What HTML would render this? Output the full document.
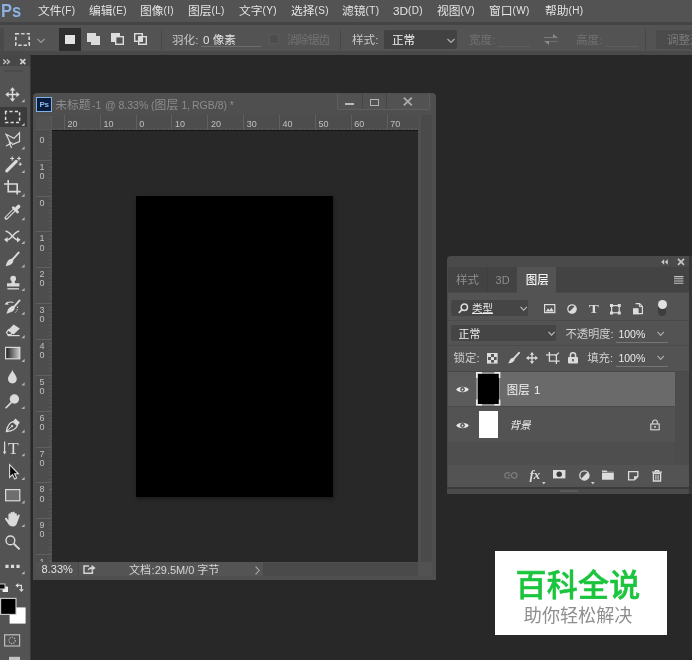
<!DOCTYPE html>
<html lang="zh-CN">
<head>
<meta charset="utf-8">
<title>Photoshop</title>
<style>
*{box-sizing:border-box;margin:0;padding:0}
html,body{width:692px;height:660px;overflow:hidden;background:#282828}body{will-change:transform;background:transparent}
body{position:relative;font-family:"Liberation Sans","Noto Sans CJK SC",sans-serif;font-size:12px;color:#dcdcdc;line-height:1}
.abs{position:absolute}
.t{position:absolute;white-space:nowrap;line-height:14px;height:14px}
#menubar{left:0;top:0;width:692px;height:22px;background:#535353}
#menusep{left:0;top:21.8px;width:692px;height:3px;background:#444}
#optbar{left:0;top:24.7px;width:692px;height:26.7px;background:#535353}
#optsep{left:0;top:51.4px;width:692px;height:3.4px;background:#494949}
.menu{top:3.9px;font-size:11.8px;color:#e4e4e4}
.menu small{font-size:10px;letter-spacing:0.3px;position:relative;top:-0.9px}
#toolbar{left:0;top:55px;width:30.2px;height:605px;background:#535353}
#toolhead{left:0;top:55px;width:30.2px;height:11.2px;background:#474747}
svg{position:absolute;overflow:visible}
.rl{font-size:9px;color:#c0c0c0;line-height:14px}
.tt{top:97.5px;color:#8c8c8c}
</style>
</head>
<body>
<!-- menu bar -->
<div id="menubar" class="abs"></div>
<div id="menusep" class="abs"></div>
<div id="optbar" class="abs"></div>
<div id="optsep" class="abs"></div>
<div class="t" style="left:1.2px;top:0.6px;font-size:19px;font-weight:bold;color:#8ab1e0;line-height:20px;height:20px;letter-spacing:0;transform:scaleX(0.87);transform-origin:0 0">Ps</div>
<div class="t menu" style="left:38px">文件<small>(F)</small></div>
<div class="t menu" style="left:89px">编辑<small>(E)</small></div>
<div class="t menu" style="left:140px">图像<small>(I)</small></div>
<div class="t menu" style="left:188px">图层<small>(L)</small></div>
<div class="t menu" style="left:239px">文字<small>(Y)</small></div>
<div class="t menu" style="left:291px">选择<small>(S)</small></div>
<div class="t menu" style="left:342px">滤镜<small>(T)</small></div>
<div class="t menu" style="left:393px">3D<small>(D)</small></div>
<div class="t menu" style="left:437px">视图<small>(V)</small></div>
<div class="t menu" style="left:489px">窗口<small>(W)</small></div>
<div class="t menu" style="left:545px">帮助<small>(H)</small></div>


<!-- options bar -->
<div class="abs" style="left:0;top:28px;width:4px;height:23px;background:#4a4a4a"></div>
<svg style="left:15px;top:33px" width="16" height="14" viewBox="0 0 16 14"><rect x="0.8" y="0.8" width="13.4" height="11.4" fill="none" stroke="#d6d6d6" stroke-width="1.6" stroke-dasharray="3.4 2"/></svg>
<svg style="left:37px;top:38px" width="8" height="6" viewBox="0 0 8 6"><path d="M0.5 1 L4 4.5 L7.5 1" fill="none" stroke="#9a9a9a" stroke-width="1.2"/></svg>
<div class="abs" style="left:59px;top:28px;width:22px;height:23px;background:#2e2e2e"></div>
<div class="abs" style="left:65.2px;top:34.6px;width:9.6px;height:9.6px;background:#e2e2e2"></div>
<svg style="left:87px;top:33px" width="14" height="13" viewBox="0 0 14 13"><path d="M0 0H9V3H13V12H4V9H0Z" fill="#dcdcdc"/></svg>
<svg style="left:111px;top:33px" width="14" height="13" viewBox="0 0 14 13"><path d="M0 0H9V3H4V9H0Z" fill="#dcdcdc"/><rect x="4.7" y="3.7" width="7.6" height="7.6" fill="none" stroke="#dcdcdc" stroke-width="1.4"/></svg>
<svg style="left:134px;top:33px" width="14" height="13" viewBox="0 0 14 13"><rect x="0.7" y="0.7" width="7.6" height="7.6" fill="none" stroke="#dcdcdc" stroke-width="1.4"/><rect x="4.7" y="3.7" width="7.6" height="7.6" fill="none" stroke="#dcdcdc" stroke-width="1.4"/><rect x="5" y="4" width="3" height="4" fill="#dcdcdc"/></svg>
<div class="abs" style="left:161px;top:29px;width:1px;height:21px;background:#474747"></div>
<div class="t" style="left:172px;top:32.9px;font-size:11.6px;color:#c8c8c8">羽化:</div>
<div class="t" style="left:203px;top:32.9px;font-size:11.6px;color:#e0e0e0">0 像素</div>
<div class="abs" style="left:201px;top:46px;width:60px;height:1px;background:#6e6e6e"></div>
<div class="abs" style="left:269px;top:34px;width:10px;height:10px;background:#4d4d4d;border:1px solid #595959"></div>
<div class="t" style="left:287px;top:32.9px;font-size:11.6px;color:#727272;letter-spacing:-1.1px">消除锯齿</div>
<div class="abs" style="left:340px;top:29px;width:1px;height:21px;background:#474747"></div>
<div class="t" style="left:352px;top:32.9px;font-size:11.6px;color:#c8c8c8">样式:</div>
<div class="abs" style="left:384px;top:30px;width:73px;height:19px;background:#424242;border-radius:2px"></div>
<div class="t" style="left:392px;top:32.9px;font-size:11.6px;color:#f0f0f0">正常</div>
<svg style="left:447px;top:38px" width="8" height="6" viewBox="0 0 8 6"><path d="M0.5 1 L4 4.5 L7.5 1" fill="none" stroke="#b0b0b0" stroke-width="1.2"/></svg>
<div class="t" style="left:469px;top:32.9px;font-size:11.6px;color:#717171">宽度:</div>
<div class="abs" style="left:498px;top:46px;width:32px;height:1px;background:#5e5e5e"></div>
<svg style="left:544px;top:33px" width="14" height="13" viewBox="0 0 14 13"><path d="M0 4 H9 V1 L14 4.8 H0Z M14 8.5 H5 V12 L0 8 H14Z" fill="#8a8a8a"/></svg>
<div class="t" style="left:576px;top:32.9px;font-size:11.6px;color:#717171">高度:</div>
<div class="abs" style="left:606px;top:46px;width:32px;height:1px;background:#5e5e5e"></div>
<div class="abs" style="left:645px;top:29px;width:1px;height:21px;background:#474747"></div>
<div class="abs" style="left:656px;top:30px;width:40px;height:19px;background:#4b4b4b;border-radius:2px"></div>
<div class="t" style="left:667px;top:32.9px;font-size:11.6px;color:#7a7a7a">调整边缘</div>


<!-- document window -->
<div class="abs" style="left:32.6px;top:93px;width:403.2px;height:487.2px;background:#4f4f4f;border-radius:4px 4px 0 0"></div>

<div class="abs" style="left:36px;top:96.5px;width:15.5px;height:15px;background:#0b1c3c;border:1.3px solid #7fb2ea"></div>
<div class="t" style="left:39.4px;top:97.6px;font-size:8px;font-weight:bold;color:#8dbcf0;line-height:13px;height:13px;letter-spacing:-0.2px">Ps</div>
<div class="t tt" style="left:55.2px;font-size:11.8px">未标题</div><div class="t tt" style="left:92px;font-size:10.5px">-1</div><div class="t tt" style="left:105px;font-size:10.5px">@</div><div class="t tt" style="left:118.5px;font-size:10.5px">8.33%</div><div class="t tt" style="left:151px;font-size:10.5px">(</div><div class="t tt" style="left:154.6px;font-size:11.8px">图层</div><div class="t tt" style="left:181.5px;font-size:10.5px">1,</div><div class="t tt" style="left:192px;font-size:10.5px">RGB/8)</div><div class="t tt" style="left:229.8px;font-size:10.5px">*</div>
<div class="abs" style="left:336.5px;top:94px;width:93px;height:16px;background:#525252;border:1px solid #5e5e5e;border-top:none;border-radius:0 0 2px 2px"></div>
<div class="abs" style="left:362px;top:94px;width:1px;height:15px;background:#454545"></div>
<div class="abs" style="left:386px;top:94px;width:1px;height:15px;background:#454545"></div>
<div class="abs" style="left:345px;top:103px;width:9px;height:2px;background:#b9b9b9"></div>
<div class="abs" style="left:370px;top:99px;width:9.2px;height:7.2px;border:1.5px solid #b3b3b3"></div>
<svg style="left:403.2px;top:97.3px" width="10" height="9" viewBox="0 0 10 9"><path d="M0.8 0.6L8.8 8.4M8.8 0.6L0.8 8.4" stroke="#adadad" stroke-width="1.8" fill="none"/></svg>
<!-- rulers -->
<div class="abs" style="left:36px;top:115px;width:382px;height:15.5px;background:#4d4d4d"></div>
<div class="abs" style="left:36px;top:115px;width:15.6px;height:447px;background:#4d4d4d"></div>
<div class="abs" style="left:36px;top:115.5px;width:15.5px;height:14px;background:#525252;border-right:1px dotted #5e5e5e;border-bottom:1px dotted #5e5e5e"></div>
<div class="abs" style="left:51.6px;top:127.5px;width:366px;height:2.5px;background:repeating-linear-gradient(90deg,#777 0 1px,transparent 1px 3.585px);background-position:1.45px 0;opacity:.38"></div>
<div class="abs" style="left:49px;top:131px;width:2.5px;height:431px;background:repeating-linear-gradient(180deg,#777 0 1px,transparent 1px 3.585px);background-position:0 -0.43px;opacity:.38"></div>
<div class="abs" style="left:63.8px;top:115px;width:1px;height:15px;background:#606060"></div><div class="t rl" style="left:67.5px;top:117.3px">20</div><div class="abs" style="left:99.7px;top:115px;width:1px;height:15px;background:#606060"></div><div class="t rl" style="left:103.4px;top:117.3px">10</div><div class="abs" style="left:135.5px;top:115px;width:1px;height:15px;background:#606060"></div><div class="t rl" style="left:139.2px;top:117.3px">0</div><div class="abs" style="left:171.3px;top:115px;width:1px;height:15px;background:#606060"></div><div class="t rl" style="left:175.0px;top:117.3px">10</div><div class="abs" style="left:207.2px;top:115px;width:1px;height:15px;background:#606060"></div><div class="t rl" style="left:210.9px;top:117.3px">20</div><div class="abs" style="left:243.1px;top:115px;width:1px;height:15px;background:#606060"></div><div class="t rl" style="left:246.8px;top:117.3px">30</div><div class="abs" style="left:278.9px;top:115px;width:1px;height:15px;background:#606060"></div><div class="t rl" style="left:282.6px;top:117.3px">40</div><div class="abs" style="left:314.8px;top:115px;width:1px;height:15px;background:#606060"></div><div class="t rl" style="left:318.4px;top:117.3px">50</div><div class="abs" style="left:350.6px;top:115px;width:1px;height:15px;background:#606060"></div><div class="t rl" style="left:354.3px;top:117.3px">60</div><div class="abs" style="left:386.5px;top:115px;width:1px;height:15px;background:#606060"></div><div class="t rl" style="left:390.2px;top:117.3px">70</div>
<div class="t rl" style="left:39.5px;top:133.0px">0</div><div class="abs" style="left:36px;top:159.6px;width:15px;height:1px;background:#606060"></div><div class="t rl" style="left:39.5px;top:159.6px">1</div><div class="t rl" style="left:39.5px;top:168.8px">0</div><div class="abs" style="left:36px;top:195.5px;width:15px;height:1px;background:#606060"></div><div class="t rl" style="left:39.5px;top:195.5px">0</div><div class="abs" style="left:36px;top:231.3px;width:15px;height:1px;background:#606060"></div><div class="t rl" style="left:39.5px;top:231.3px">1</div><div class="t rl" style="left:39.5px;top:240.5px">0</div><div class="abs" style="left:36px;top:267.2px;width:15px;height:1px;background:#606060"></div><div class="t rl" style="left:39.5px;top:267.2px">2</div><div class="t rl" style="left:39.5px;top:276.4px">0</div><div class="abs" style="left:36px;top:303.0px;width:15px;height:1px;background:#606060"></div><div class="t rl" style="left:39.5px;top:303.0px">3</div><div class="t rl" style="left:39.5px;top:312.2px">0</div><div class="abs" style="left:36px;top:338.9px;width:15px;height:1px;background:#606060"></div><div class="t rl" style="left:39.5px;top:338.9px">4</div><div class="t rl" style="left:39.5px;top:348.1px">0</div><div class="abs" style="left:36px;top:374.8px;width:15px;height:1px;background:#606060"></div><div class="t rl" style="left:39.5px;top:374.8px">5</div><div class="t rl" style="left:39.5px;top:384.0px">0</div><div class="abs" style="left:36px;top:410.6px;width:15px;height:1px;background:#606060"></div><div class="t rl" style="left:39.5px;top:410.6px">6</div><div class="t rl" style="left:39.5px;top:419.8px">0</div><div class="abs" style="left:36px;top:446.5px;width:15px;height:1px;background:#606060"></div><div class="t rl" style="left:39.5px;top:446.5px">7</div><div class="t rl" style="left:39.5px;top:455.6px">0</div><div class="abs" style="left:36px;top:482.3px;width:15px;height:1px;background:#606060"></div><div class="t rl" style="left:39.5px;top:482.3px">8</div><div class="t rl" style="left:39.5px;top:491.5px">0</div><div class="abs" style="left:36px;top:518.2px;width:15px;height:1px;background:#606060"></div><div class="t rl" style="left:39.5px;top:518.2px">9</div><div class="t rl" style="left:39.5px;top:527.4px">0</div><div class="abs" style="left:36px;top:554.0px;width:15px;height:1px;background:#606060"></div><div class="abs" style="left:36px;top:557px;width:15px;height:5px;overflow:hidden"><div class="t rl" style="left:3.5px;top:-2px">1</div></div>
<!-- canvas -->
<div class="abs" style="left:51.6px;top:130.3px;width:366px;height:431.5px;background:#282828;border-top:1px solid #151515"></div>
<div class="abs" style="left:135.6px;top:195.6px;width:197.4px;height:301px;background:#000;box-shadow:1px 2px 4px rgba(0,0,0,.35)"></div>
<!-- scrollbars / status -->
<div class="abs" style="left:417.6px;top:115px;width:14.8px;height:447px;background:#4a4a4a;border-left:3px solid #505050"></div>
<div class="abs" style="left:36px;top:561.8px;width:396.4px;height:14.4px;background:#4a4a4a;border-top:1px solid #505050"></div><div class="abs" style="left:417.6px;top:561.8px;width:14.8px;height:14.4px;background:#525252"></div>
<div class="abs" style="left:36px;top:561.8px;width:227.4px;height:14.4px;background:#545454"></div>
<div class="abs" style="left:36px;top:561.8px;width:43.4px;height:14.4px;background:#515151;border-right:1px solid #484848"></div>
<div class="t" style="left:41.6px;top:561.6px;font-size:11px;color:#e2e2e2">8.33%</div>
<svg style="left:82.5px;top:563.5px" width="13" height="10" viewBox="0 0 13 10"><path d="M6 2H1V9.2H9.4V6.4" fill="none" stroke="#d4d4d4" stroke-width="1.5"/><path d="M4.6 7C4.8 4.4 6.6 3 8.6 3V0.8L12.6 3.9L8.6 7V4.9C7 4.9 5.6 5.6 4.6 7Z" fill="#d4d4d4"/></svg>
<div class="t" style="left:129px;top:562.5px;font-size:11px;color:#d6d6d6">文档</div><div class="t" style="left:151.6px;top:562.5px;font-size:11px;color:#d6d6d6">:29.5M/0</div><div class="t" style="left:197.3px;top:562.5px;font-size:11px;color:#d6d6d6">字节</div>
<svg style="left:255px;top:565.5px" width="5" height="9" viewBox="0 0 5 9"><path d="M0.6 0.6L4.2 4.5L0.6 8.4" fill="none" stroke="#aaa" stroke-width="1.1"/></svg>


<!-- layers panel -->
<div class="abs" style="left:447px;top:255.5px;width:242px;height:238.5px;background:#4a4a4a;border-radius:4px 0 0 0"></div>
<div class="abs" style="left:689px;top:255.5px;width:3px;height:238.5px;background:#363636"></div>
<div class="abs" style="left:447.8px;top:267.3px;width:241.2px;height:25.2px;background:#434343"></div>
<div class="abs" style="left:517.4px;top:267.3px;width:38.8px;height:25.4px;background:#535353"></div>
<div class="abs" style="left:487px;top:267.3px;width:1px;height:25.2px;background:#3e3e3e"></div>
<div class="abs" style="left:447.8px;top:292.5px;width:241.2px;height:194.8px;background:#535353"></div>
<div class="t" style="left:456px;top:273px;font-size:11.5px;color:#8e8e8e">样式</div>
<div class="t" style="left:495.6px;top:273px;font-size:11px;color:#8e8e8e">3D</div>
<div class="t" style="left:525.8px;top:273px;font-size:11.5px;color:#f4f4f4;font-weight:500">图层</div>
<svg style="left:660px;top:258px" width="26" height="8" viewBox="0 0 26 8"><path d="M4.2 1.2V6.8L1.2 4ZM7.8 1.2V6.8L4.8 4Z" fill="#c8c8c8"/><path d="M18 0.9L24 6.9M24 0.9L18 6.9" stroke="#c8c8c8" stroke-width="1.6" fill="none"/></svg>
<svg style="left:674px;top:276px" width="10" height="8" viewBox="0 0 10 8"><path d="M0 0.6H9.4M0 2.8H9.4M0 5H9.4M0 7.2H9.4" stroke="#c4c4c4" stroke-width="1.1"/></svg>
<!-- filter row -->
<div class="abs" style="left:451.3px;top:299.8px;width:77px;height:16.2px;background:#454545;border-radius:2px"></div>
<svg style="left:457.5px;top:302.5px" width="11" height="11" viewBox="0 0 11 11"><circle cx="6.3" cy="4.2" r="3.2" fill="none" stroke="#dcdcdc" stroke-width="1.5"/><path d="M4 6.6L0.8 9.8" stroke="#dcdcdc" stroke-width="1.7"/></svg>
<div class="t" style="left:472px;top:301px;font-size:10.5px;color:#e8e8e8;text-decoration:underline;text-underline-offset:1px">类型</div>
<svg style="left:520px;top:306px" width="8" height="6" viewBox="0 0 8 6"><path d="M0.5 0.8L3.7 4.2L6.9 0.8" fill="none" stroke="#bcbcbc" stroke-width="1.1"/></svg>
<svg style="left:544px;top:303.5px" width="12" height="10" viewBox="0 0 12 10"><rect x="0.6" y="0.6" width="10.2" height="8" fill="none" stroke="#dcdcdc" stroke-width="1.2"/><path d="M1.8 7.6L4 4.2L5.6 6.2L7.4 3.6L9.8 7.6Z" fill="#dcdcdc"/></svg>
<svg style="left:566.5px;top:303.6px" width="10" height="10" viewBox="0 0 10 10"><circle cx="5" cy="5" r="4.2" fill="none" stroke="#dcdcdc" stroke-width="1.2"/><path d="M2 8A4.2 4.2 0 0 0 8 2Z" fill="#dcdcdc"/></svg>
<div class="t" style="left:589px;top:300.7px;font-family:'Liberation Serif',serif;font-weight:bold;font-size:13px;color:#dcdcdc;line-height:15px;height:15px;transform:scaleX(1.13);transform-origin:0 0">T</div>
<svg style="left:609.6px;top:303.6px" width="11" height="11" viewBox="0 0 11 11"><rect x="1.6" y="1.6" width="7.6" height="7.2" fill="none" stroke="#dcdcdc" stroke-width="1.2"/><path d="M0 0h3v3h-3zM7.8 0h3v3h-3zM0 7.4h3v3h-3zM7.8 7.4h3v3h-3z" fill="#dcdcdc"/></svg>
<svg style="left:632.6px;top:303.4px" width="10" height="12" viewBox="0 0 10 12"><path d="M2.6 0.6H6.6L9.4 3.4V10.6H5" fill="none" stroke="#dcdcdc" stroke-width="1.2"/><path d="M6.4 0.8V3.6H9.2" fill="none" stroke="#dcdcdc" stroke-width="1"/><rect x="0" y="5.2" width="5.6" height="6.2" fill="#dcdcdc"/></svg>
<div class="abs" style="left:658px;top:301px;width:8.4px;height:15px;background:#3d3d3d;border-radius:4.2px"></div>
<div class="abs" style="left:657.8px;top:300.4px;width:8.8px;height:8.8px;background:#e0e0e0;border-radius:50%"></div>
<div class="abs" style="left:447.8px;top:320.4px;width:241.2px;height:1px;background:#4a4a4a"></div>
<div class="abs" style="left:447.8px;top:345.4px;width:241.2px;height:1px;background:#4a4a4a"></div>
<!-- blend row -->
<div class="abs" style="left:451.3px;top:325.2px;width:105.2px;height:16.2px;background:#454545;border-radius:2px"></div>
<div class="t" style="left:458.6px;top:326.8px;font-size:10.8px;color:#f2f2f2">正常</div>
<svg style="left:548px;top:331px" width="8" height="6" viewBox="0 0 8 6"><path d="M0.5 0.8L3.6 4.2L6.7 0.8" fill="none" stroke="#bcbcbc" stroke-width="1.1"/></svg>
<div class="t" style="left:565.4px;top:327px;font-size:11.3px;color:#cfcfcf">不透明度:</div>
<div class="t" style="left:618.4px;top:327px;font-size:10.5px;color:#ececec">100%</div>
<div class="abs" style="left:615.6px;top:342px;width:52px;height:1px;background:#757575"></div>
<svg style="left:657px;top:330.6px" width="8" height="6" viewBox="0 0 8 6"><path d="M0.5 0.8L3.7 4.4L6.9 0.8" fill="none" stroke="#b0b0b0" stroke-width="1.1"/></svg>
<!-- lock row -->
<div class="t" style="left:453.6px;top:351px;font-size:11.4px;color:#cfcfcf">锁定:</div>
<svg style="left:487px;top:352.6px" width="11" height="11" viewBox="0 0 11 11"><rect x="0.5" y="0.5" width="9.6" height="9.6" fill="none" stroke="#dcdcdc" stroke-width="1"/><path d="M1 1h3v3h-3zM7 1h3v3h-3zM4 4h3v3h-3zM1 7h3v3h-3zM7 7h3v3h-3z" fill="#dcdcdc"/></svg>
<svg style="left:507.5px;top:352.4px" width="12" height="12" viewBox="0 0 12 12"><path d="M11 0.8L6 6.4" stroke="#dcdcdc" stroke-width="1.9" stroke-linecap="round"/><path d="M6 6C7.2 7.2 6.4 9.2 4.6 10.2C3.2 11 1.6 10.8 0.4 11.6C1.2 10 1.4 8.8 2.2 7.6C3.2 6 5 5.2 6 6Z" fill="#dcdcdc"/></svg>
<svg style="left:526.4px;top:352.4px" width="12" height="12" viewBox="0 0 12 12"><path d="M6 2V10M2 6H10" stroke="#dcdcdc" stroke-width="1.3"/><path d="M6 0L8.2 2.8H3.8ZM6 12L8.2 9.2H3.8ZM0 6L2.8 3.8V8.2ZM12 6L9.2 3.8V8.2Z" fill="#dcdcdc"/></svg>
<svg style="left:545.6px;top:352.4px" width="14" height="12" viewBox="0 0 14 12"><path d="M3.4 0V9.2H13.6M0 2.8H10.4V12" fill="none" stroke="#dcdcdc" stroke-width="1.3"/><path d="M9.4 3.8L13 0.6" stroke="#dcdcdc" stroke-width="1.2"/></svg>
<svg style="left:568px;top:352.4px" width="10" height="12" viewBox="0 0 10 12"><path d="M2.4 5.4V3.4A2.6 2.6 0 0 1 7.6 3.4V5.4" fill="none" stroke="#dcdcdc" stroke-width="1.5"/><rect x="0" y="5" width="10" height="6.4" rx="0.8" fill="#dcdcdc"/><rect x="4.2" y="7" width="1.6" height="2.4" fill="#535353"/></svg>
<div class="t" style="left:587.2px;top:351px;font-size:11.4px;color:#cfcfcf">填充:</div>
<div class="t" style="left:618.4px;top:351px;font-size:10.5px;color:#ececec">100%</div>
<div class="abs" style="left:615.6px;top:365.6px;width:52px;height:1px;background:#757575"></div>
<svg style="left:657px;top:354.6px" width="8" height="6" viewBox="0 0 8 6"><path d="M0.5 0.8L3.7 4.4L6.9 0.8" fill="none" stroke="#b0b0b0" stroke-width="1.1"/></svg>
<!-- layer rows -->
<div class="abs" style="left:447.8px;top:370.6px;width:241.2px;height:1.4px;background:#474747"></div>
<div class="abs" style="left:447.8px;top:372px;width:226.8px;height:34px;background:#5b5b5b"></div>
<div class="abs" style="left:500.3px;top:372px;width:174.3px;height:34px;background:#6a6a6a"></div>
<div class="abs" style="left:447.8px;top:406px;width:226.8px;height:1px;background:#4a4a4a"></div>
<div class="abs" style="left:447.8px;top:442.4px;width:226.8px;height:23px;background:#4e4e4e"></div>
<div class="abs" style="left:674.6px;top:372px;width:14.4px;height:93.4px;background:#4c4c4c"></div>
<div class="abs" style="left:447px;top:487.2px;width:242px;height:1.6px;background:#3b3b3b"></div>
<div class="abs" style="left:560px;top:490.4px;width:18px;height:1.6px;background:#5a5a5a"></div>
<svg style="left:455.6px;top:385px" width="13" height="9" viewBox="0 0 13 9"><path d="M0.2 4.5C2.4 0.9 10.6 0.9 12.8 4.5C10.6 8.1 2.4 8.1 0.2 4.5Z" fill="#e6e6e6"/><circle cx="6.5" cy="4.4" r="2.3" fill="#4a4a4a"/><circle cx="6.5" cy="4.4" r="1" fill="#e6e6e6"/></svg>
<svg style="left:455.6px;top:420.6px" width="13" height="9" viewBox="0 0 13 9"><path d="M0.2 4.5C2.4 0.9 10.6 0.9 12.8 4.5C10.6 8.1 2.4 8.1 0.2 4.5Z" fill="#e6e6e6"/><circle cx="6.5" cy="4.4" r="2.3" fill="#4a4a4a"/><circle cx="6.5" cy="4.4" r="1" fill="#e6e6e6"/></svg>
<div class="abs" style="left:476px;top:372px;width:24.4px;height:33.6px;background:#8c8c8c"></div><div class="abs" style="left:477.6px;top:373.6px;width:21.2px;height:30.4px;background:#000"></div><svg style="left:476px;top:372px" width="24.4" height="33.6" viewBox="0 0 24.4 33.6"><path d="M0.8 6V0.8H6M18.4 0.8H23.6V6M23.6 27.6V32.8H18.4M6 32.8H0.8V27.6" fill="none" stroke="#ededed" stroke-width="1.6"/></svg>
<div class="abs" style="left:479px;top:411px;width:18.8px;height:27px;background:#fff"></div>
<div class="t" style="left:506.8px;top:382.6px;font-size:11.4px;color:#f4f4f4;word-spacing:1.2px">图层 1</div>
<div class="t" style="left:509.4px;top:418px;font-size:10.6px;color:#f0f0f0;font-style:italic">背景</div>
<svg style="left:650px;top:419.2px" width="10" height="12" viewBox="0 0 10 12"><path d="M2.6 5V3.4A2.4 2.4 0 0 1 7.4 3.4V5" fill="none" stroke="#d0d0d0" stroke-width="1.2"/><rect x="0.8" y="5" width="8.4" height="5.8" fill="none" stroke="#d0d0d0" stroke-width="1.2"/><rect x="4.2" y="7" width="1.6" height="1.8" fill="#d0d0d0"/></svg>
<!-- footer icons -->
<svg style="left:504px;top:471.6px" width="14" height="7" viewBox="0 0 14 7"><path d="M6 1.4C4.6 0.2 0.6 0.4 0.6 3.4C0.6 6.4 4.6 6.6 6 5.4M4 3.4H6.6" fill="none" stroke="#7c7c7c" stroke-width="1.2"/><ellipse cx="10.2" cy="3.4" rx="2.8" ry="2.7" fill="none" stroke="#7c7c7c" stroke-width="1.2"/></svg>
<div class="t" style="left:529.4px;top:467px;font-family:'Liberation Serif',serif;font-style:italic;font-weight:bold;font-size:13.5px;color:#dcdcdc;line-height:16px;height:16px;letter-spacing:-0.3px">fx</div>
<svg style="left:541.6px;top:482px" width="4" height="3" viewBox="0 0 4 3"><path d="M0 0H3.6L1.8 2.4Z" fill="#cfcfcf"/></svg>
<svg style="left:553px;top:470.2px" width="13" height="9" viewBox="0 0 13 9"><rect width="12.4" height="8.4" fill="#dcdcdc"/><circle cx="6.2" cy="4.2" r="2.7" fill="#3a3a3a"/></svg>
<svg style="left:578.8px;top:470.2px" width="11" height="11" viewBox="0 0 11 11"><circle cx="5.4" cy="5.4" r="4.6" fill="none" stroke="#dcdcdc" stroke-width="1.3"/><path d="M2.1 8.7A4.6 4.6 0 0 0 8.7 2.1Z" fill="#dcdcdc"/></svg>
<svg style="left:590.8px;top:482px" width="4" height="3" viewBox="0 0 4 3"><path d="M0 0H3.6L1.8 2.4Z" fill="#cfcfcf"/></svg>
<svg style="left:602.4px;top:469.6px" width="12" height="10" viewBox="0 0 12 10"><path d="M0 0.4H4.6L5.6 1.8H11.8V9.8H0Z" fill="#dcdcdc"/><path d="M0 2.4H11.8" stroke="#535353" stroke-width="0.7"/></svg>
<svg style="left:627.8px;top:471px" width="11" height="10" viewBox="0 0 11 10"><path d="M0.6 0.6H9.8V5.6L6.4 8.8H0.6Z" fill="none" stroke="#dcdcdc" stroke-width="1.3"/><path d="M9.8 5.2H6V8.8Z" fill="#dcdcdc"/></svg>
<svg style="left:652px;top:469.6px" width="10" height="12" viewBox="0 0 10 12"><path d="M0 2.2H10M3.4 2V0.6H6.6V2" fill="none" stroke="#dcdcdc" stroke-width="1.3"/><path d="M1.4 3.4H8.6V11H1.4Z" fill="none" stroke="#dcdcdc" stroke-width="1.3"/><path d="M3.9 4.6V9.8M6.1 4.6V9.8" stroke="#dcdcdc" stroke-width="1"/></svg>
<!-- watermark -->
<div class="abs" style="left:494.5px;top:551px;width:172.3px;height:83.5px;background:#fff"></div>
<div class="t" style="left:515.4px;top:567.2px;font-size:31px;font-weight:500;color:#1bc43d;-webkit-text-stroke:0.55px #1bc43d;line-height:38px;height:38px;letter-spacing:0.3px">百科全说</div>
<div class="t" style="left:523.8px;top:603.4px;font-size:18.1px;color:#8e8e8e;line-height:26px;height:26px">助你轻松解决</div>

<!-- toolbar -->
<div id="toolbar" class="abs"></div>
<div id="toolhead" class="abs"></div>


<div class="abs" style="left:30.2px;top:56px;width:1px;height:604px;background:#3a3a3a"></div>
<div class="abs" style="left:4px;top:69.6px;width:19px;height:2px;background:#4b4b4b"></div>
<div class="abs" style="left:0;top:106.6px;width:26.8px;height:20.8px;background:#3b3b3b"></div>
<svg style="left:0;top:0" width="32" height="660" viewBox="0 0 32 660" fill="none" stroke-linecap="butt">
<!-- header -->
<path d="M3.3 59.5L5.8 61.7L3.3 63.9M6.9 59.5L9.4 61.7L6.9 63.9" stroke="#c4c4c4" stroke-width="1.3"/>
<path d="M20.3 59.2L25.3 64.2M25.3 59.2L20.3 64.2" stroke="#cfcfcf" stroke-width="1.7"/>
<path d="M24.6 99.1V102.3H21.4Z" fill="#b4b4b4"/><path d="M24.6 122.7V125.9H21.4Z" fill="#b4b4b4"/><path d="M24.6 146.3V149.5H21.4Z" fill="#b4b4b4"/><path d="M24.6 169.9V173.1H21.4Z" fill="#b4b4b4"/><path d="M24.6 193.5V196.7H21.4Z" fill="#b4b4b4"/><path d="M24.6 217.1V220.3H21.4Z" fill="#b4b4b4"/><path d="M24.6 240.7V243.9H21.4Z" fill="#b4b4b4"/><path d="M24.6 264.3V267.5H21.4Z" fill="#b4b4b4"/><path d="M24.6 287.9V291.1H21.4Z" fill="#b4b4b4"/><path d="M24.6 311.5V314.7H21.4Z" fill="#b4b4b4"/><path d="M24.6 335.1V338.3H21.4Z" fill="#b4b4b4"/><path d="M24.6 358.7V361.9H21.4Z" fill="#b4b4b4"/><path d="M24.6 382.3V385.5H21.4Z" fill="#b4b4b4"/><path d="M24.6 405.9V409.1H21.4Z" fill="#b4b4b4"/><path d="M24.6 429.5V432.7H21.4Z" fill="#b4b4b4"/><path d="M24.6 453.1V456.3H21.4Z" fill="#b4b4b4"/><path d="M24.6 476.7V479.9H21.4Z" fill="#b4b4b4"/><path d="M24.6 500.3V503.5H21.4Z" fill="#b4b4b4"/><path d="M24.6 523.9V527.1H21.4Z" fill="#b4b4b4"/><path d="M24.6 571.1V574.3H21.4Z" fill="#b4b4b4"/>
<!-- move -->
<path d="M12.5 89.5V99.5M7.5 94.5H17.5" stroke="#dadada" stroke-width="1.5"/>
<path d="M12.5 87.3L15.3 90.6H9.7ZM12.5 101.7L15.3 98.4H9.7ZM5.3 94.5L8.6 91.7V97.3ZM19.7 94.5L16.4 91.7V97.3Z" fill="#dadada"/>
<!-- marquee -->
<rect x="5.6" y="111.6" width="14" height="11" stroke="#dadada" stroke-width="1.5" stroke-dasharray="3.2 2.2" stroke-dashoffset="1.6"/>
<!-- polygonal lasso -->
<path d="M10.5 143L6 134.3L14 138.3L19.5 132.8V141.6L12 144.6" stroke="#dadada" stroke-width="1.2" stroke-linejoin="miter"/>
<path d="M6 146L12.5 142.6M9 141.5L11.5 148" stroke="#dadada" stroke-width="1.2"/>
<!-- wand -->
<path d="M6.8 170.8L16.2 161.4" stroke="#dadada" stroke-width="3.2" stroke-linecap="round"/>
<path d="M12.2 156.6V160.4M10.3 158.5H14.1M19 156.6V160.4M17.1 158.5H20.9M20.2 162.6V165.8M18.6 164.2H21.8" stroke="#dadada" stroke-width="1.1"/>
<!-- crop -->
<path d="M8.2 180V191.6H20.6M4 184H17.2V194.6" stroke="#dadada" stroke-width="1.6"/>
<!-- eyedropper -->
<path d="M6.3 217.9L14 210.2" stroke="#dadada" stroke-width="3.6" stroke-linecap="round"/>
<path d="M6.6 217.6L13.6 210.6" stroke="#535353" stroke-width="1.4" stroke-linecap="round"/>
<path d="M13.2 207.6L17.6 212M15.5 209.6L18 207" stroke="#dadada" stroke-width="2.6" stroke-linecap="round"/>
<path d="M17 208L18.6 206.4" stroke="#dadada" stroke-width="3.6" stroke-linecap="round"/>
<!-- content aware move -->
<path d="M5.5 231.3C11 231.3 13 240 18 240M19.2 231.3C14 231.3 12 240 6.5 240" stroke="#dadada" stroke-width="1.4"/>
<path d="M4 239.8L7.6 237V242.6ZM20.6 239.8L17 237V242.6Z" fill="#dadada"/>
<!-- brush -->
<path d="M18.6 252.6L12.6 259.4" stroke="#dadada" stroke-width="2" stroke-linecap="round"/>
<path d="M12.6 259C14.2 260.6 13 263.4 10.4 264.8C8.6 265.8 6.6 265.8 5.6 266.4C6.4 264.4 6.6 262.6 7.6 261.2C9 259.2 11.2 258 12.6 259Z" fill="#dadada"/>
<!-- stamp -->
<circle cx="13.2" cy="278.6" r="2.9" fill="#dadada"/>
<path d="M11.8 280.5H14.6L15 283.2H19.4V286.4H7V283.2H11.4Z" fill="#dadada"/>
<path d="M7.4 288.8H19" stroke="#dadada" stroke-width="1.3"/>
<!-- history brush -->
<path d="M19.6 300.4L14.4 306.4" stroke="#dadada" stroke-width="1.8" stroke-linecap="round"/>
<path d="M14.2 306C15.6 307.6 14.6 310.4 12 311.8C10.2 312.8 8.2 312.8 6.4 314C7.2 312 7.4 310.2 8.4 308.8C9.8 306.8 12.8 305 14.2 306Z" fill="#dadada"/>
<path d="M4.4 304.6L7.2 301.6L8.6 304.8Z" fill="#dadada"/>
<path d="M7 303C9 301.8 11.4 301.8 13.4 302.6" stroke="#dadada" stroke-width="1.1"/>
<path d="M17.4 306.5C17.8 309 17 311.4 15 312.8" stroke="#dadada" stroke-width="1" stroke-dasharray="1.4 1.2"/>
<!-- eraser -->
<path d="M13.6 324.4L19.8 328.6L13.6 334.4L7.6 330.4Z" fill="#dadada"/>
<path d="M8.6 329.6L12.6 332.6L10.8 334.6H8L6.4 332.6Z" stroke="#dadada" stroke-width="1.1"/>
<path d="M7.6 335.6H19.6" stroke="#dadada" stroke-width="1.2"/>
<!-- gradient -->
<rect x="5.6" y="347.4" width="14.2" height="11.4" fill="url(#gr)" stroke="#dadada" stroke-width="1.2"/>
<!-- drop -->
<path d="M12.4 370C13.8 373.4 16.8 375.8 16.8 379C16.8 381.6 14.8 383.4 12.4 383.4C10 383.4 8 381.6 8 379C8 375.8 11 373.4 12.4 370Z" fill="#dadada"/>
<!-- dodge -->
<circle cx="14.4" cy="399" r="4.7" fill="#dadada"/>
<path d="M11.4 402.4L5.6 408.2" stroke="#dadada" stroke-width="1.6"/>
<!-- pen -->
<path d="M15.4 418.6L19.8 422.6L17.6 425.4L13 421.4Z" fill="#dadada"/>
<path d="M13 421.6L17.4 425.4C16.4 428.6 12.6 431 6.4 431.6C7.2 426.4 9.4 422.6 13 421.6Z" stroke="#dadada" stroke-width="1.3"/>
<path d="M7 431L11.6 426.6" stroke="#dadada" stroke-width="1"/>
<circle cx="12" cy="426.2" r="1.1" fill="#dadada"/>
<!-- vertical type -->
<path d="M4.6 441.6V452" stroke="#dadada" stroke-width="1.2"/>
<path d="M2.8 451.4H6.4L4.6 454.4Z" fill="#dadada"/>
<text x="8" y="454.2" font-family="Liberation Serif, serif" font-size="17.5" fill="#dadada" stroke="none">T</text>
<!-- path selection -->
<path d="M9.6 464.6V477.4L12.5 474.6L14.6 479L16.6 478L14.6 473.8H18.4Z" fill="#0a0a0a" stroke="#dadada" stroke-width="1.1" stroke-linejoin="miter"/>
<!-- rectangle -->
<rect x="5.6" y="489.6" width="14.2" height="11.2" fill="#6e6e6e" stroke="#dadada" stroke-width="1.2"/>
<!-- hand -->
<path d="M8.4 520.6V514.6C8.4 513 10.4 513 10.4 514.6V513.2C10.4 511.6 12.6 511.6 12.6 513.2V513C12.6 511.4 14.8 511.4 14.8 513V514.4C14.8 512.8 16.8 512.8 16.8 514.4V516.6L17.8 515C18.6 513.8 20.2 514.6 19.6 516L17.6 521.4C16.6 524.6 15.6 526.4 12.6 526.4C9.6 526.4 8.6 524.8 7.4 522.6L5.2 519.4C4.4 518.2 5.8 517 6.8 518Z" fill="#dadada"/>
<!-- zoom -->
<circle cx="10.4" cy="540.4" r="4.4" stroke="#dadada" stroke-width="1.4"/>
<path d="M13.8 543.8L19.6 549.4" stroke="#dadada" stroke-width="2"/>
<!-- dots -->
<path d="M5.4 564.8h3.2v3.2h-3.2zM10.9 564.8h3.2v3.2h-3.2zM16.4 564.8h3.2v3.2h-3.2z" fill="#dadada"/>
<!-- default colors -->
<rect x="2.6" y="586.6" width="5.4" height="5.4" fill="#f0f0f0"/>
<rect x="-1" y="584" width="6" height="5" fill="#0a0a0a" stroke="#dadada" stroke-width="0.9"/>
<!-- swap -->
<path d="M17.6 585.4H21.4V589.6" stroke="#dadada" stroke-width="1.2"/>
<path d="M15.4 585.4L18.2 583V587.8ZM21.4 592L19 589.2H23.8Z" fill="#dadada"/>
<!-- swatches -->
<rect x="9.6" y="607.4" width="16" height="16.2" fill="#ffffff"/>
<rect x="0.6" y="598.4" width="15.4" height="16" fill="#000" stroke="#cfcfcf" stroke-width="1.1"/>
<!-- quick mask -->
<rect x="4.6" y="634.8" width="15" height="11.2" stroke="#bdbdbd" stroke-width="1.2"/>
<circle cx="12.1" cy="640.4" r="3.2" stroke="#bdbdbd" stroke-width="1.1" stroke-dasharray="1.3 1.1"/>
<rect x="9" y="656.8" width="11" height="4" fill="#c4c4c4"/>
<defs><linearGradient id="gr" x1="0" x2="1" y1="0" y2="0"><stop offset="0" stop-color="#1a1a1a"/><stop offset="1" stop-color="#cfcfcf"/></linearGradient></defs>
</svg>

</body>
</html>
